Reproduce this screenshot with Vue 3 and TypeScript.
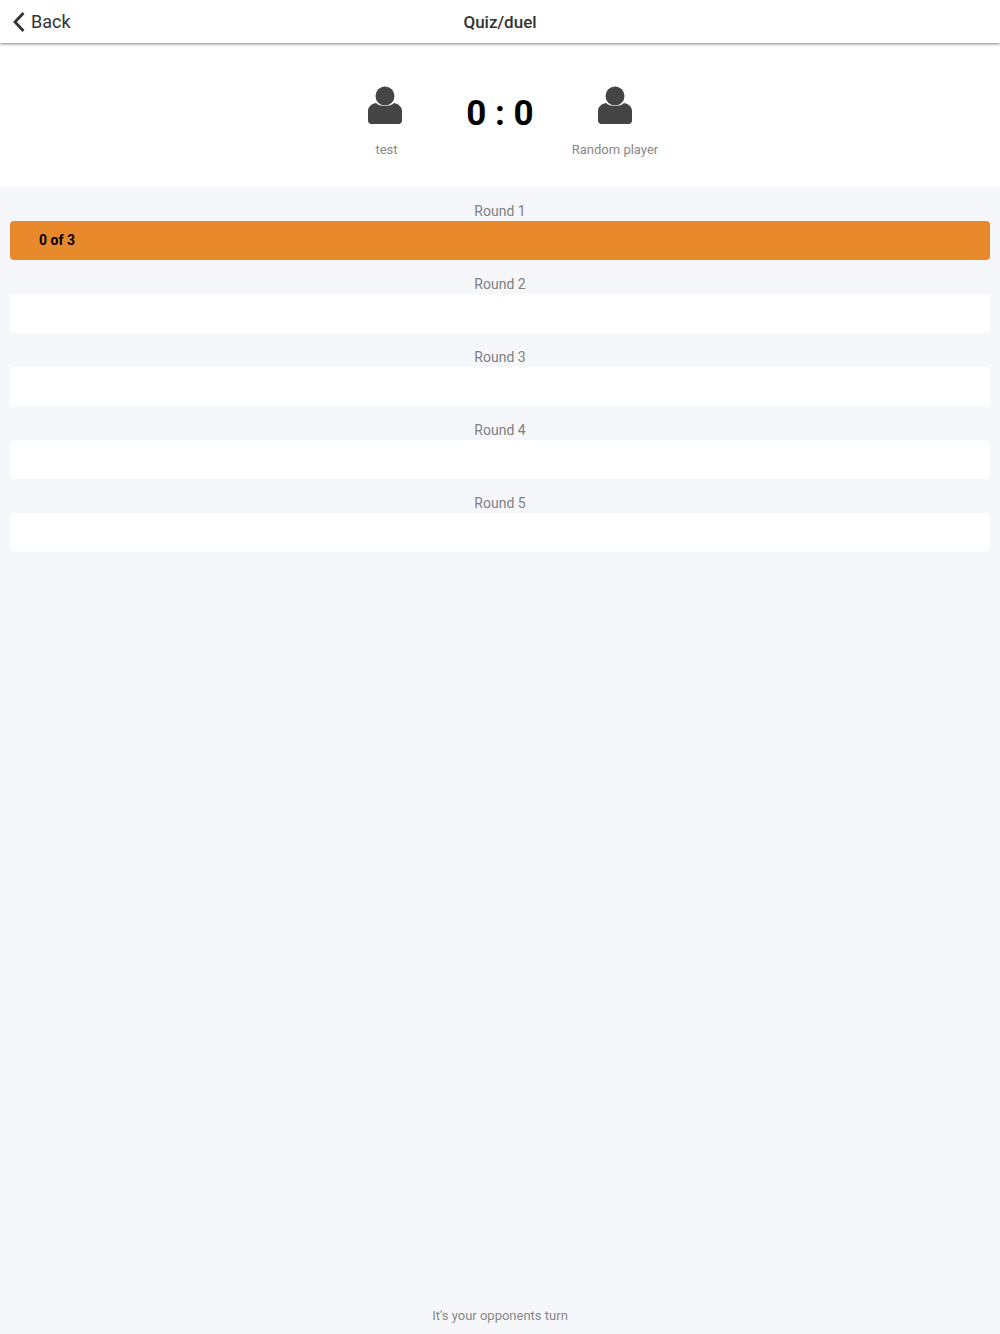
<script setup lang="ts">
const rounds = [
  { label: 'Round 1', text: '0 of 3', active: true },
  { label: 'Round 2', text: '', active: false },
  { label: 'Round 3', text: '', active: false },
  { label: 'Round 4', text: '', active: false },
  { label: 'Round 5', text: '', active: false },
]
const players = ['test', 'Random player']
</script>

<template>
  <div class="page">
    <header class="navbar">
      <div class="back">
        <svg class="chevron" width="14" height="22" viewBox="0 0 14 22">
          <path d="M11.5 2 L3 11 L11.5 20" fill="none" stroke="#333" stroke-width="2.8" />
        </svg>
        <span>Back</span>
      </div>
      <div class="title">Quiz/duel</div>
    </header>

    <section class="score">
      <div class="player player-left">
        <svg class="avatar" width="36" height="40" viewBox="0 0 36 40">
          <circle cx="18" cy="10" r="9.5" fill="#444" />
          <path d="M9 17 C12 21 24 21 27 17 C32 18 35 21 35 25 L35 34.500 C35 36.500 33.500 38 31.500 38 L4.500 38 C2.500 38 1 36.500 1 34.500 L1 25 C1 21 4 18 9 17 Z" fill="#444" />
        </svg>
        <div class="name">{{ players[0] }}</div>
      </div>
      <div class="points">0 : 0</div>
      <div class="player">
        <svg class="avatar" width="36" height="40" viewBox="0 0 36 40">
          <circle cx="18" cy="10" r="9.5" fill="#444" />
          <path d="M9 17 C12 21 24 21 27 17 C32 18 35 21 35 25 L35 34.500 C35 36.500 33.500 38 31.500 38 L4.500 38 C2.500 38 1 36.500 1 34.500 L1 25 C1 21 4 18 9 17 Z" fill="#444" />
        </svg>
        <div class="name">{{ players[1] }}</div>
      </div>
    </section>

    <main class="rounds">
      <div v-for="r in rounds" :key="r.label" class="round">
        <div class="round-label">{{ r.label }}</div>
        <div class="bar" :class="r.active && 'active'">{{ r.text }}</div>
      </div>
    </main>

    <footer class="status">It's your opponents turn</footer>
  </div>
</template>

<style>
body {
  background: #f5f7fb;
}
</style>

<style scoped>
.page {
  height: 1334px;
  display: flex;
  flex-direction: column;
  background: #f5f7fb;
  font-family: Roboto, "Liberation Sans", sans-serif;
  overflow: hidden;
}

.navbar {
  height: 43px;
  flex: none;
  position: relative;
  z-index: 1;
  display: flex;
  align-items: center;
  justify-content: center;
  background: #fff;
  box-shadow: 0 1px 3px rgba(0, 0, 0, 0.5);
}

.back {
  position: absolute;
  left: 12px;
  top: 0;
  height: 43px;
  display: flex;
  align-items: center;
  gap: 5px;
  font-size: 18px;
  color: #333;
}

.title {
  font-size: 17px;
  font-weight: 500;
  color: #333;
}

.score {
  height: 144px;
  flex: none;
  display: flex;
  justify-content: center;
  background: #fff;
}

.player {
  width: 132px;
  display: flex;
  flex-direction: column;
  align-items: center;
  padding-top: 43px;
}

.avatar {
  display: block;
}

.name {
  margin-top: 15px;
  font-size: 13px;
  line-height: 18px;
  color: #888;
}

.player-left .name {
  margin-left: 3px;
}

.player-left .avatar {
  margin-left: -1px;
}

.points {
  width: 98px;
  padding-top: 49px;
  text-align: center;
  font-size: 35px;
  line-height: 44px;
  font-weight: 700;
  color: #000;
  white-space: nowrap;
}

.rounds {
  flex: 1;
  padding: 15px 10px 0;
  display: flex;
  flex-direction: column;
  gap: 15px;
}

.round-label {
  height: 19px;
  text-align: center;
  font-size: 14px;
  line-height: 19px;
  color: #808080;
}

.bar {
  height: 39px;
  padding-left: 29px;
  border-radius: 4px;
  background: #fff;
  font-size: 14px;
  font-weight: 700;
  line-height: 39px;
  color: #000;
}

.bar.active {
  background: #e8892b;
}

.status {
  flex: none;
  height: 36px;
  text-align: center;
  font-size: 13px;
  line-height: 36px;
  color: #888;
}
</style>
